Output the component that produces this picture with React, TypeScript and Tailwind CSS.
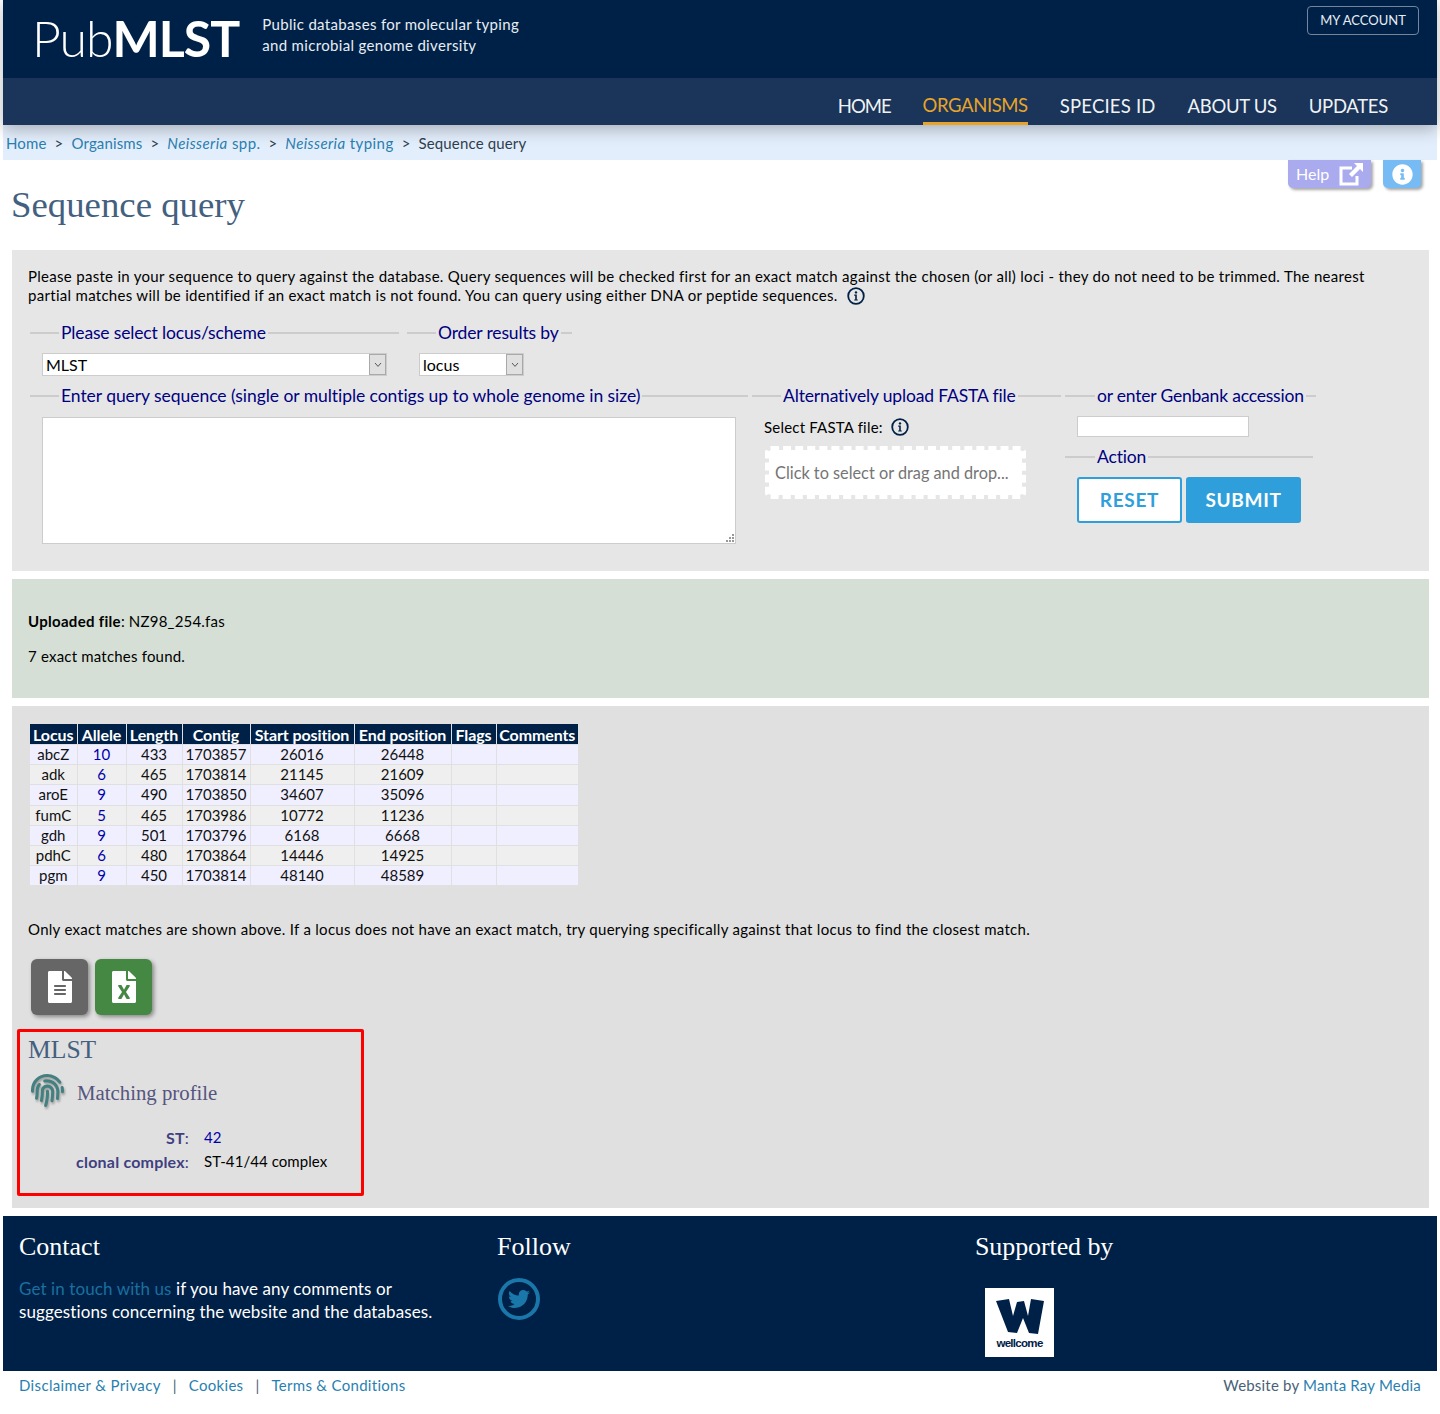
import { FaFileAlt, FaFileExcel, FaFingerprint, FaInfoCircle, FaTwitter } from "react-icons/fa";

const sans = "font-['Lato','Noto_Sans',sans-serif]";
const serif = "font-['Liberation_Serif',serif]";

function InfoIcon() {
  return (
    <svg width="18" height="18" viewBox="0 0 18 18" className="inline-block align-[-4px]">
      <circle cx="9" cy="9" r="7.8" fill="none" stroke="#002147" strokeWidth="1.8" />
      <circle cx="9" cy="5.4" r="1.2" fill="#002147" />
      <path d="M7.2 7.6h2.6v4.8h1v1.2H7.2v-1.2h1v-3.6h-1z" fill="#002147" />
    </svg>
  );
}

function HelpLinkIcon() {
  return (
    <svg width="24" height="23" viewBox="0 0 24 23">
      <path d="M13 5H2v16h16v-8" fill="none" stroke="#ffffff" strokeWidth="3" />
      <path d="M15 0h9v9l-3-3-8 8-3-3 8-8z" fill="#ffffff" />
    </svg>
  );
}

function Box({ legend, className, legendClass = "ml-[29px] tracking-[-0.15px]", children }: { legend: string; className: string; legendClass?: string; children?: React.ReactNode }) {
  return (
    <fieldset className={`border-0 border-t-2 border-[#cccccc] ${className}`}>
      <legend className={`${legendClass} px-[2px] text-[17.5px] leading-[24px] text-[#000080]`}>{legend}</legend>
      {children}
    </fieldset>
  );
}

function FakeSelect({ value, className }: { value: string; className: string }) {
  return (
    <div className={`flex h-[23px] bg-white border border-[#cccccc] ${className}`}>
      <div className="flex-1 pl-[3px] text-[16px] leading-[21px] tracking-normal text-black">{value}</div>
      <div className="flex w-[17px] items-center justify-center bg-[#e0e0e0] border border-[#a9a9a9]">
        <svg width="8" height="6" viewBox="0 0 8 6"><path d="M1 1l3 3.4L7 1" fill="none" stroke="#555" strokeWidth="1" /></svg>
      </div>
    </div>
  );
}

const rows = [
  ["abcZ", "10", "433", "1703857", "26016", "26448"],
  ["adk", "6", "465", "1703814", "21145", "21609"],
  ["aroE", "9", "490", "1703850", "34607", "35096"],
  ["fumC", "5", "465", "1703986", "10772", "11236"],
  ["gdh", "9", "501", "1703796", "6168", "6668"],
  ["pdhC", "6", "480", "1703864", "14446", "14925"],
  ["pgm", "9", "450", "1703814", "48140", "48589"],
];

const heads: [string, string][] = [
  ["Locus", "w-[47px]"],
  ["Allele", "w-[49px]"],
  ["Length", "w-[56px]"],
  ["Contig", "w-[68px]"],
  ["Start position", "w-[104px]"],
  ["End position", "w-[97px]"],
  ["Flags", "w-[45px]"],
  ["Comments", "w-[82px]"],
];

function ResultsTable() {
  return (
    <table className="w-[548px] table-fixed border-collapse text-[15px] leading-[19px] tracking-normal text-center text-[#111]">
      <thead>
        <tr className="bg-[#002147] text-white">
          {heads.map(([h, w]) => (
            <th key={h} className={`${w} h-[20px] p-0 pt-[1px] text-[16px] font-bold tracking-[-0.1px] whitespace-nowrap border-r border-[#e0e0e0] last:border-r-0`}>{h}</th>
          ))}
        </tr>
      </thead>
      <tbody>
        {rows.map((r, i) => (
          <tr key={r[0]} className={i % 2 === 0 ? "bg-[#efefff]" : "bg-[#efefef]"}>
            <td className="h-[20.2px] p-0 border border-[#e0e0e0] border-l-0">{r[0]}</td>
            <td className="p-0 border border-[#e0e0e0] text-[#0000aa]">{r[1]}</td>
            <td className="p-0 border border-[#e0e0e0]">{r[2]}</td>
            <td className="p-0 border border-[#e0e0e0]">{r[3]}</td>
            <td className="p-0 border border-[#e0e0e0]">{r[4]}</td>
            <td className="p-0 border border-[#e0e0e0]">{r[5]}</td>
            <td className="p-0 border border-[#e0e0e0]"></td>
            <td className="p-0 border border-[#e0e0e0] border-r-0"></td>
          </tr>
        ))}
      </tbody>
    </table>
  );
}

const linkBlue = "text-[#2a7fb0]";

export default function App() {
  return (
    <div className={`${sans} bg-white px-[3px] h-[1414px] overflow-hidden text-[15px] tracking-[0.3px] text-black`}>
      <header className="relative shadow-[0_4px_16px_rgba(0,0,0,0.28)]">
        <div className="flex h-[78px] bg-[#002147] text-white">
          <div className="flex items-center pl-[29px] pb-[2px]">
            <span className="text-[50px] leading-none font-light tracking-[-1px]">Pub<span className="font-bold">MLST</span></span>
          </div>
          <div className="ml-[23px] pt-[14px] text-[15px] leading-[21px] tracking-[0.33px] text-[#e8edf3]">
            <div>Public databases for molecular typing</div>
            <div>and microbial genome diversity</div>
          </div>
          <div className="ml-auto pr-[18px] pt-[6px]">
            <div className="flex h-[29px] w-[112px] items-center justify-center rounded-[4px] border border-[#76859b] text-[13px] tracking-normal text-[#e8edf3]">MY ACCOUNT</div>
          </div>
        </div>
        <nav className="flex h-[47px] justify-end gap-[32px] bg-[#1a3559] pr-[49px] text-[18.5px] tracking-[-0.3px] text-[#f0f3f6]">
          <a className="flex h-full items-center pt-[11px] tracking-[-1px]">HOME</a>
          <a className="flex h-full items-center border-b-[3px] border-[#e8a428] pt-[11px] tracking-[-0.4px] text-[#e8a428]">ORGANISMS</a>
          <a className="flex h-full items-center pt-[11px] tracking-[0.2px]">SPECIES ID</a>
          <a className="flex h-full items-center pt-[11px]">ABOUT US</a>
          <a className="flex h-full items-center pt-[11px]">UPDATES</a>
        </nav>
      </header>

      <div className="flex h-[35px] items-center gap-[8px] bg-[#e3eefc] pl-[3px] pt-[2px] text-[15px] tracking-[0.15px] text-[#2f3e4e]">
        <span className={linkBlue}>Home</span><span>&gt;</span>
        <span className={linkBlue}>Organisms</span><span>&gt;</span>
        <span className={`${linkBlue} tracking-[0.42px]`}><i>Neisseria</i> spp.</span><span>&gt;</span>
        <span className={`${linkBlue} tracking-[0.42px]`}><i>Neisseria</i> typing</span><span>&gt;</span>
        <span>Sequence query</span>
      </div>

      <div className="flex h-[28px] justify-end gap-[12px] pr-[16px]">
        <div className="flex w-[83px] items-center gap-[10px] rounded-b-[5px] bg-[#aaaaee] pl-[8px] text-[16px] tracking-normal text-white shadow-[2px_2px_3px_rgba(0,0,0,0.35)]">
          Help <HelpLinkIcon />
        </div>
        <div className="flex w-[38px] items-center justify-center rounded-b-[5px] bg-[#77bbf5] text-white shadow-[2px_2px_3px_rgba(0,0,0,0.35)]">
          <FaInfoCircle className="text-[21px]" />
        </div>
      </div>

      <h1 className={`${serif} ml-[8px] mt-[-3px] h-[65px] text-[36.8px] leading-[40px] tracking-normal font-normal text-[#446080]`}>Sequence query</h1>

      <div className="ml-[9px] mr-[8px] h-[321px] bg-[#e6e6e6] pt-[17px] pl-[16px]">
        <p className="w-[1370px] text-[15px] leading-[19px] tracking-[0.295px]">
          Please paste in your sequence to query against the database. Query sequences will be checked first for an exact match against the chosen (or all) loci - they do not need to be trimmed. The nearest partial matches will be identified if an exact match is not found. You can query using either DNA or peptide sequences. <span className="ml-[5px]"><InfoIcon /></span>
        </p>
        <div className="mt-[16px] ml-[2px] flex gap-[8px]">
          <Box legend="Please select locus/scheme" className="h-[52px] w-[369px]">
            <FakeSelect value="MLST" className="mt-[8px] ml-[12px] w-[345px]" />
          </Box>
          <Box legend="Order results by" className="h-[52px] w-[165px]">
            <FakeSelect value="locus" className="mt-[8px] ml-[12px] w-[105px]" />
          </Box>
        </div>
        <div className="mt-[11px] ml-[2px] flex gap-[4px]">
          <Box legend="Enter query sequence (single or multiple contigs up to whole genome in size)" legendClass="ml-[29px] tracking-[-0.05px]" className="w-[718px]">
            <div className="relative mt-[9px] ml-[12px] h-[127px] w-[694px]">
              <textarea className="block h-full w-full resize-none border border-[#cccccc] bg-white" />
              <svg width="8" height="8" viewBox="0 0 8 8" className="absolute bottom-[2px] right-[2px]">
                <path d="M6 0h2v2H6zM3 3h2v2H3zM6 3h2v2H6zM0 6h2v2H0zM3 6h2v2H3zM6 6h2v2H6z" fill="#999999" />
              </svg>
            </div>
          </Box>
          <Box legend="Alternatively upload FASTA file" className="w-[309px]">
            <div className="mt-[9px] ml-[12px] flex items-center gap-[8px] text-[15px] leading-[20px] tracking-[0.2px]">Select FASTA file: <InfoIcon /></div>
            <div className="mt-[9px] ml-[13px] flex h-[53px] w-[261px] items-center rounded-[6px] border-[4px] border-dashed border-white bg-white bg-clip-padding pl-[6px] pt-[1px] text-[16.3px] tracking-normal text-[#757575]">Click to select or drag and drop...</div>
          </Box>
          <div className="w-[251px]">
            <Box legend="or enter Genbank accession" legendClass="ml-[30px] tracking-[-0.2px]" className="w-[251px]">
              <input className="mt-[8px] ml-[12px] block h-[21px] w-[172px] border border-[#cccccc] bg-white" />
            </Box>
            <Box legend="Action" legendClass="ml-[30px] tracking-[-0.15px]" className="mt-[8px] w-[248px]">
              <div className="mt-[8px] ml-[12px] flex gap-[4px]">
                <div className="flex h-[46px] w-[105px] items-center justify-center rounded-[3px] border-2 border-[#2f9fdc] bg-white text-[19px] font-bold tracking-[0.7px] text-[#2f9fdc]">RESET</div>
                <div className="flex h-[46px] w-[115px] items-center justify-center rounded-[3px] bg-[#2f9fdc] text-[19px] font-bold tracking-[0.7px] text-white">SUBMIT</div>
              </div>
            </Box>
          </div>
        </div>
      </div>

      <div className="ml-[9px] mr-[8px] mt-[8px] h-[119px] bg-[#d5dfd5] pl-[16px] pt-[33px] leading-[19px] tracking-[0.2px]">
        <p><b className="tracking-[0.3px]">Uploaded file</b>: NZ98_254.fas</p>
        <p className="mt-[16px]">7 exact matches found.</p>
      </div>

      <div className="ml-[9px] mr-[8px] mt-[8px] h-[502px] bg-[#e0e0e0] pt-[18px]">
        <div className="ml-[18px]"><ResultsTable /></div>
        <p className="ml-[16px] mt-[34px] leading-[19px] tracking-[0.285px]">Only exact matches are shown above. If a locus does not have an exact match, try querying specifically against that locus to find the closest match.</p>
        <div className="ml-[19px] mt-[20px] flex gap-[7px]">
          <div className="flex h-[56px] w-[57px] items-center justify-center rounded-[6px] bg-[#666666] text-white shadow-[2px_2px_4px_rgba(0,0,0,0.4)]"><FaFileAlt className="text-[32px]" /></div>
          <div className="flex h-[56px] w-[57px] items-center justify-center rounded-[6px] bg-[#448844] text-white shadow-[2px_2px_4px_rgba(0,0,0,0.4)]"><FaFileExcel className="text-[32px]" /></div>
        </div>
        <div className="ml-[5px] mt-[14px] h-[167px] w-[347px] rounded-[2px] border-[3px] border-[#ff0000] pl-[7px] tracking-normal">
          <h2 className={`${serif} ml-[1px] mt-[2px] text-[25.6px] leading-[31px] font-normal text-[#446080]`}>MLST</h2>
          <div className="mt-[9px] flex h-[36px] items-start">
            <FaFingerprint className="ml-[4px] text-[33px] text-[#448080] drop-shadow-[1px_2px_1px_rgba(0,0,0,0.3)]" />
            <h3 className={`${serif} ml-[13px] mt-[2px] text-[20.8px] leading-[34px] font-normal text-[#55557f]`}>Matching profile</h3>
          </div>
          <dl className="mt-[18px] grid grid-cols-[162px_1fr] gap-x-[15px] gap-y-[5px] leading-[19px]">
            <dt className="text-right text-[16px] font-bold tracking-[0.2px] text-[#404080]">ST<span className="font-normal">:</span></dt>
            <dd className="text-[#0000aa]">42</dd>
            <dt className="text-right text-[16px] font-bold tracking-[0.2px] text-[#404080] whitespace-nowrap">clonal complex<span className="font-normal">:</span></dt>
            <dd className="tracking-[0.07px]">ST-41/44 complex</dd>
          </dl>
        </div>
      </div>

      <footer className="mt-[8px] grid h-[155px] grid-cols-[478px_478px_1fr] bg-[#002147] pl-[16px] pt-[14px] tracking-normal text-white">
        <div>
          <h2 className={`${serif} text-[26px] leading-[34px] font-normal`}>Contact</h2>
          <p className="mt-[13px] w-[440px] text-[17px] leading-[23px] tracking-[0.1px]"><span className="text-[#1a6fa0]">Get in touch with us</span> if you have any comments or suggestions concerning the website and the databases.</p>
        </div>
        <div>
          <h2 className={`${serif} text-[26px] leading-[34px] font-normal`}>Follow</h2>
          <div className="ml-[1px] mt-[14px] flex h-[42px] w-[42px] items-center justify-center rounded-full border-[4px] border-[#1a77aa] text-[#1a77aa]"><FaTwitter className="text-[22px]" /></div>
        </div>
        <div>
          <h2 className={`${serif} text-[26px] leading-[34px] tracking-[-0.1px] font-normal`}>Supported by</h2>
          <div className="ml-[10px] mt-[24px] flex h-[69px] w-[69px] flex-col items-center bg-white pt-[11px]">
            <svg width="48" height="35" viewBox="0 0 48 35"><path d="M0 2l13-2 4 17L21 3l7-1 4 15 3-17 13 2-6 33-9-1-6-15-6 15-9-1z" fill="#002147" /></svg>
            <span className="mt-[3px] font-['Liberation_Sans',sans-serif] text-[11.5px] leading-[12px] font-bold tracking-[-0.7px] text-[#002147]">wellcome</span>
          </div>
        </div>
      </footer>

      <div className="flex items-center justify-between px-[16px] pt-[4px] text-[15px] leading-[20px] text-[#4a5f78]">
        <div className="flex gap-[12px]">
          <span className={`${linkBlue} tracking-[0.35px]`}>Disclaimer &amp; Privacy</span><span>|</span>
          <span className={linkBlue}>Cookies</span><span>|</span>
          <span className={linkBlue}>Terms &amp; Conditions</span>
        </div>
        <div className="tracking-[0.2px]">Website by <span className={linkBlue}>Manta Ray Media</span></div>
      </div>
    </div>
  );
}
